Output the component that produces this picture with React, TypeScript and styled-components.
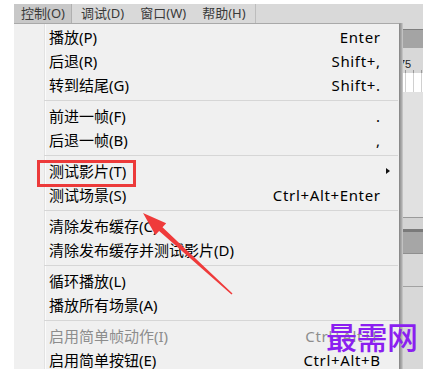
import React from "react";
import styled, { createGlobalStyle } from "styled-components";

const Global = createGlobalStyle`
  html, body { margin: 0; padding: 0; background: #ffffff; }
  body { font-family: "Noto Sans", "Noto Sans CJK SC", sans-serif; }
`;

const Page = styled.div`
  padding: 4px 14px;
  width: 409px;
`;

const Screen = styled.div`
  position: relative;
  width: 409px;
  height: 365px;
  overflow: hidden;
  background: #d9d9d9;
  display: flex;
  flex-direction: column;
`;

const MenuBar = styled.div`
  height: 19px;
  display: flex;
  align-items: stretch;
  gap: 2px;
  background: #d9d9d9;
  font-family: "Noto Sans", "Noto Sans CJK SC", sans-serif;
  font-size: 13px;
  color: #3a3a3a;
`;

const MenuBarItem = styled.div<{ $active?: boolean }>`
  display: flex;
  align-items: center;
  padding: 0 7px;
  background: ${(p) => (p.$active ? "#c8c8c8" : "transparent")};
  box-shadow: ${(p) => (p.$active ? "inset -1px 0 0 #b0b0b0" : "none")};
  line-height: 19px;
`;

const BarDivider = styled.div`
  width: 1px;
  background: #bdbdbd;
`;

const Band = styled.div<{ $h: number; $bg: string; $top?: string }>`
  flex: 0 0 ${(p) => p.$h}px;
  background: ${(p) => p.$bg};
  border-top: ${(p) => (p.$top ? `1px solid ${p.$top}` : "none")};
`;

const Ruler = styled.div`
  flex: 0 0 25px;
  background: #d8d8d8;
  display: flex;
  align-items: flex-start;
  padding-left: 385px;
  font-family: "Liberation Sans", sans-serif;
  font-size: 11px;
  color: #222;
  background-image: repeating-linear-gradient(
    to right,
    transparent 0,
    transparent 7px,
    #9a9a9a 7px,
    #9a9a9a 8px
  );
  background-size: 100% 3px;
  background-position: 0 100%;
  background-repeat: no-repeat;
  line-height: 12px;
  padding-top: 10px;
  box-sizing: border-box;
`;

const Frames = styled.div`
  flex: 0 0 19px;
  background-color: #ffffff;
  background-image: repeating-linear-gradient(
    to right,
    transparent 0,
    transparent 7px,
    #d0d0d0 7px,
    #d0d0d0 8px
  );
`;

const Menu = styled.div`
  position: absolute;
  top: 19px;
  left: 0;
  width: 386px;
  bottom: -20px;
  box-sizing: border-box;
  border-top: 1px solid #a9a9a9;
  border-right: 1px solid #8a8a8a;
  padding-top: 1px;
  background: linear-gradient(
    to right,
    #f0f0f0 30px,
    #e2e2e2 30px,
    #e2e2e2 31px,
    #fbfbfb 31px,
    #fbfbfb 32px,
    #f0f0f0 32px
  );
  box-shadow: 1px 0 0 #9c9c9c, 2px 0 0 #ababab, 3px 0 0 #c2c2c2;
  font-family: "Noto Sans", "Noto Sans CJK SC", sans-serif;
  font-size: 15px;
`;

const Row = styled.div<{ $disabled?: boolean }>`
  height: 24px;
  display: grid;
  grid-template-columns: 1fr auto 19px;
  align-items: center;
  padding-left: 35px;
  color: ${(p) => (p.$disabled ? "#8d8d8d" : "#000000")};
  line-height: 24px;
  white-space: nowrap;
`;

const Shortcut = styled.span`
  font-family: "Noto Sans", sans-serif;
  font-size: 15px;
  letter-spacing: 0.65px;
  margin-right: -0.65px;
`;

const SubArrow = styled.span`
  width: 0;
  height: 0;
  margin-left: 6px;
  border-left: 4px solid #111;
  border-top: 3.5px solid transparent;
  border-bottom: 3.5px solid transparent;
`;

const Separator = styled.div`
  height: 1px;
  margin: 3px 1px 3px 30px;
  background: #d6d6d6;
`;

const Overlay = styled.svg`
  position: absolute;
  left: 0;
  top: 0;
  width: 409px;
  height: 365px;
  pointer-events: none;
`;

const Watermark = styled.div`
  position: absolute;
  left: 312px;
  top: 314px;
  font-family: "Noto Sans CJK SC", sans-serif;
  font-weight: 500;
  font-size: 31px;
  line-height: 36px;
  letter-spacing: -0.5px;
  color: #8b1ff0;
`;

type Item = { label: string; shortcut?: string; sub?: boolean; disabled?: boolean };

const groups: Item[][] = [
  [
    { label: "播放(P)", shortcut: "Enter" },
    { label: "后退(R)", shortcut: "Shift+," },
    { label: "转到结尾(G)", shortcut: "Shift+." },
  ],
  [
    { label: "前进一帧(F)", shortcut: "." },
    { label: "后退一帧(B)", shortcut: "," },
  ],
  [
    { label: "测试影片(T)", sub: true },
    { label: "测试场景(S)", shortcut: "Ctrl+Alt+Enter" },
  ],
  [{ label: "清除发布缓存(C)" }, { label: "清除发布缓存并测试影片(D)" }],
  [{ label: "循环播放(L)" }, { label: "播放所有场景(A)" }],
  [
    { label: "启用简单帧动作(I)", shortcut: "Ctrl+Alt+F", disabled: true },
    { label: "启用简单按钮(E)", shortcut: "Ctrl+Alt+B" },
  ],
];

export default function App() {
  return (
    <Page>
      <Global />
      <Screen>
        <MenuBar>
          <MenuBarItem $active>控制(O)</MenuBarItem>
          <MenuBarItem>调试(D)</MenuBarItem>
          <MenuBarItem>窗口(W)</MenuBarItem>
          <MenuBarItem>帮助(H)</MenuBarItem>
          <BarDivider />
        </MenuBar>
        <Band $h={6} $bg="#d9d9d9" />
        <Band $h={18} $bg="#a4a4a4" $top="#7e7e7e" />
        <Ruler>75</Ruler>
        <Frames />
        <Band $h={125} $bg="#e1e1e1" />
        <Band $h={11} $bg="#d3d3d3" $top="#9a9a9a" />
        <Band $h={3} $bg="#7a7a7a" />
        <Band $h={21} $bg="#a6a6a6" />
        <Band $h={32} $bg="#d8d8d8" $top="#8f8f8f" />
        <Band $h={90} $bg="#d8d8d8" $top="#a2a2a2" />

        <Menu>
          {groups.map((g, gi) => (
            <React.Fragment key={gi}>
              {gi > 0 && <Separator />}
              {g.map((it) => (
                <Row key={it.label} $disabled={it.disabled}>
                  <span>{it.label}</span>
                  <Shortcut>{it.shortcut ?? ""}</Shortcut>
                  {it.sub ? <SubArrow /> : <span />}
                </Row>
              ))}
            </React.Fragment>
          ))}
        </Menu>

        <Watermark>最需网</Watermark>

        <Overlay viewBox="0 0 409 365">
          <rect x="24.5" y="157.5" width="96" height="24" fill="none" stroke="#ec3a3a" strokeWidth="3" />
          <polygon
            points="129,209 141.4,231.1 145.1,227.05 217.5,290.5 218.5,289.5 148.5,223.35 152.2,219.3"
            fill="#ef3b3b"
          />
        </Overlay>
      </Screen>
    </Page>
  );
}
